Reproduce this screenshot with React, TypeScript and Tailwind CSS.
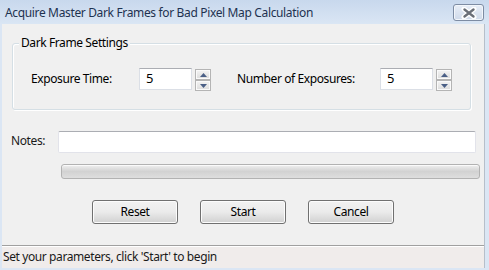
import React from "react";

function Spinner() {
  const btn =
    "w-[16px] h-[11px] border border-[#b4b4b4] bg-gradient-to-b from-[#f4f4f4] to-[#dcdcdc] flex items-center justify-center shadow-[inset_0_0_0_1px_#fafafa]";
  return (
    <div className="flex flex-col gap-[0px] ml-[3px] mt-[1px]">
      <div className={btn}>
        <svg width="7" height="4" viewBox="0 0 7 4">
          <polygon points="3.5,0 7,4 0,4" fill="#4a5f86" />
        </svg>
      </div>
      <div className={btn}>
        <svg width="7" height="4" viewBox="0 0 7 4">
          <polygon points="0,0 7,0 3.5,4" fill="#4a5f86" />
        </svg>
      </div>
    </div>
  );
}

function NumInput() {
  return (
    <div className="w-[53px] h-[22px] bg-white border border-[#dbdfe6] border-t-[#abadb3] flex items-center pl-[6px] text-[13px] text-black">
      5
    </div>
  );
}

function Btn({ label }: { label: string }) {
  return (
    <div className="w-[86px] h-[24px] mt-[1px] rounded-[3px] border border-[#707070] bg-gradient-to-b from-[#f2f2f2] via-[#ebebeb] to-[#d0d0d0] shadow-[inset_0_0_0_1px_#fcfcfc] flex items-center justify-center text-[12px] text-black">
      {label}
    </div>
  );
}

export default function App() {
  return (
    <div
      className="w-[489px] h-[270px] flex flex-col bg-[#dbe6f4] overflow-hidden text-[12px] tracking-[-0.4px] text-black"
      style={{ fontFamily: '"Noto Sans", "Open Sans", sans-serif' }}
    >
      {/* Title bar */}
      <div className="h-[24px] shrink-0 flex items-center justify-between bg-gradient-to-b from-[#c8d8ed] to-[#dae6f4] pl-[5px] pr-[5px]">
        <span className="text-[12px] text-[#1e3250] tracking-[-0.35px] leading-none mt-[1px]">
          Acquire Master Dark Frames for Bad Pixel Map Calculation
        </span>
        <div className="w-[31px] h-[17px] mt-[1px] rounded-[3px] border border-[#7d8ca3] bg-gradient-to-b from-[#e8eef7] to-[#cfdaea] flex items-center justify-center shadow-[inset_0_0_0_1px_#f2f6fb]">
          <svg width="16" height="12" viewBox="0 0 16 12">
            <path d="M3 2 L13 10 M13 2 L3 10" stroke="#ffffff" strokeWidth="5" strokeLinecap="round" />
            <path d="M3.5 2.5 L12.5 9.5 M12.5 2.5 L3.5 9.5" stroke="#6a6f78" strokeWidth="2.4" strokeLinecap="round" />
          </svg>
        </div>
      </div>

      {/* Body with frame */}
      <div className="flex-1 flex pl-[2px] pr-[4px] pb-[2px] min-h-0">
        <div className="flex-1 flex flex-col bg-[#f0f0f0] border-r border-[#b6bfca]">
          {/* group box */}
          <div className="relative mt-[19px] ml-[10px] w-[459px] h-[67px] border border-[#d5dfe5] rounded-[3px] shadow-[inset_1px_1px_0_#ffffff,1px_1px_0_#ffffff]">
            <span className="absolute left-[6px] -top-[10px] px-[2px] bg-[#f0f0f0] text-[12px] leading-[18px]">
              Dark Frame Settings
            </span>
            <div className="flex items-start mt-[24px] ml-[18px]">
              <span className="w-[108px] leading-[22px]">Exposure Time:</span>
              <NumInput />
              <Spinner />
              <span className="ml-[26px] w-[143px] leading-[22px]">Number of Exposures:</span>
              <NumInput />
              <Spinner />
            </div>
          </div>

          {/* notes */}
          <div className="flex items-start mt-[21px] ml-[9px]">
            <span className="w-[47px] leading-[20px] text-[#1a1a1a]">Notes:</span>
            <div className="w-[418px] h-[22px] bg-white border border-[#e2e3ea] border-t-[#abadb3] rounded-[2px]" />
          </div>

          {/* progress */}
          <div className="mt-[11px] ml-[59px] w-[419px] h-[15px] rounded-[3px] border border-[#b2b2b2] bg-gradient-to-b from-[#f0f0f0] via-[#d2d2d2] to-[#dedede] shadow-[inset_0_1px_0_#fafafa]" />

          {/* buttons */}
          <div className="flex mt-[20px] ml-[90px] gap-[22px]">
            <Btn label="Reset" />
            <Btn label="Start" />
            <Btn label="Cancel" />
          </div>

          <div className="flex-1" />

          {/* status bar */}
          <div className="h-[23px] border-t border-[#a0a0a0] bg-[#f0eceb] flex items-center pl-[1px] text-[12px] text-[#1a1a1a] shadow-[inset_0_1px_0_#ffffff]">
            Set your parameters, click 'Start' to begin
          </div>
        </div>
      </div>
    </div>
  );
}
